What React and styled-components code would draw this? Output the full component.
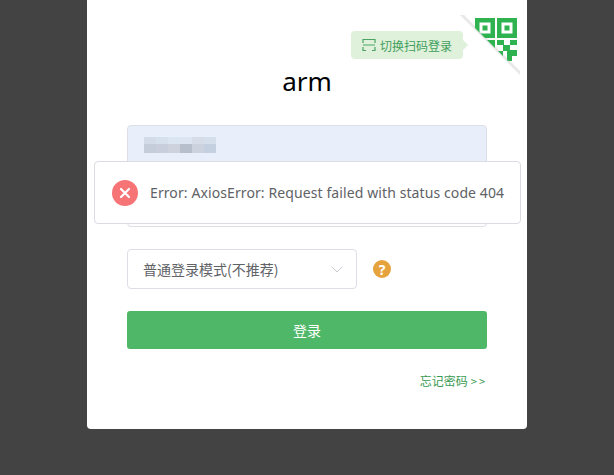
import React from 'react'
import styled, { createGlobalStyle } from 'styled-components'

const GlobalStyle = createGlobalStyle`
  html, body {
    margin: 0;
    height: 100%;
    background-color: #434343;
    overflow: hidden;
  }
`

const StyledPage = styled.div`
  position: relative;
  display: flex;
  justify-content: center;
  width: 614px;
  height: 475px;
  font-family: 'Noto Sans', 'Noto Sans CJK SC', sans-serif;
`

const StyledCard = styled.div`
  position: relative;
  box-sizing: border-box;
  width: 440px;
  height: 429px;
  padding: 64px 40px 0;
  background-color: #fff;
  border-radius: 0 0 4px 4px;
`

const StyledScanTip = styled.div`
  position: absolute;
  top: 31px;
  left: 264px;
  display: flex;
  align-items: center;
  gap: 4px;
  box-sizing: border-box;
  width: 112px;
  height: 28px;
  padding-left: 11px;
  color: #3f9f5a;
  font-size: 12px;
  font-family: 'Noto Sans CJK SC', sans-serif;
  background-color: #dff0db;
  border-radius: 4px;

  &::after {
    content: '';
    position: absolute;
    top: 9px;
    right: -5px;
    border-top: 5px solid transparent;
    border-bottom: 5px solid transparent;
    border-left: 5px solid #dff0db;
  }
`

const StyledQrCorner = styled.svg`
  position: absolute;
  top: 15px;
  left: 373px;
  display: block;
`

const StyledTitle = styled.h1`
  margin: 0 0 27px;
  height: 34px;
  color: #000;
  font-size: 26px;
  font-weight: 400;
  line-height: 34px;
  text-align: center;
`

const StyledForm = styled.div`
  display: flex;
  flex-direction: column;
  gap: 22px;
`

const StyledInput = styled.div`
  box-sizing: border-box;
  display: flex;
  align-items: center;
  width: 360px;
  height: 40px;
  padding-left: 16px;
  background-color: ${({ $filled }) => ($filled ? '#e8effb' : '#fff')};
  border: 1px solid #dcdfe6;
  border-radius: 4px;
`

const StyledMosaic = styled.div`
  display: grid;
  grid-template-columns: repeat(6, 12px);
  grid-template-rows: 7px 9px;
`

const StyledMosaicCell = styled.div`
  background-color: ${({ $tone }) => $tone};
`

const StyledModeRow = styled.div`
  display: flex;
  align-items: center;
  gap: 16px;
`

const StyledSelect = styled.div`
  box-sizing: border-box;
  display: flex;
  align-items: center;
  justify-content: space-between;
  width: 230px;
  height: 40px;
  padding: 0 13px 0 15px;
  color: #606266;
  font-size: 14px;
  font-family: 'Noto Sans CJK SC', sans-serif;
  background-color: #fff;
  border: 1px solid #dcdfe6;
  border-radius: 4px;
`

const StyledHelp = styled.span`
  display: flex;
  align-items: center;
  justify-content: center;
  width: 18px;
  height: 18px;
  color: #fff;
  font-size: 14px;
  font-weight: 700;
  background-color: #e6a23c;
  border-radius: 50%;
`

const StyledSubmit = styled.button`
  width: 360px;
  height: 38px;
  padding: 0;
  color: #fff;
  font-size: 14px;
  font-family: 'Noto Sans CJK SC', sans-serif;
  background-color: #4fb868;
  border: 0;
  border-radius: 3px;
`

const StyledForgot = styled.a`
  display: block;
  margin-top: 24px;
  color: #3a9a52;
  font-size: 12px;
  font-family: 'Noto Sans CJK SC', sans-serif;
  line-height: 16px;
  text-align: right;
`

const StyledArrows = styled.span`
  margin-left: 3px;
  font-size: 11px;
  letter-spacing: 2px;
`

const StyledToast = styled.div`
  position: absolute;
  top: 161px;
  left: 94px;
  display: flex;
  align-items: center;
  gap: 12px;
  box-sizing: border-box;
  width: 427px;
  height: 63px;
  padding-left: 17px;
  color: #606266;
  font-size: 14px;
  letter-spacing: 0.1px;
  background-color: #fff;
  border: 1px solid #d9dce1;
  border-radius: 4px;
`

const mosaicTones = [
  '#d3dbe8', '#d6dfec', '#dbe4f1', '#dce4f1', '#d6dde9', '#d5deeb',
  '#c5cddb', '#c8cedb', '#cdd2dd', '#b7bfcd', '#ccd3df', '#c4cfdf',
]

const ScanIcon = () => (
  <svg width="14" height="14" viewBox="0 0 14 14" fill="none" stroke="#4aa564" strokeWidth="1.2">
    <path d="M1 5V1.5h12V5M1 9v3.5h3M13 9v3.5h-3M1 7h12" />
  </svg>
)

const QrCorner = () => (
  <StyledQrCorner width="60" height="60" viewBox="0 0 60 60">
    <defs>
      <clipPath id="fold-side">
        <polygon points="0,-2 60,-2 60,58" />
      </clipPath>
    </defs>
    <polygon points="0,0 4,0 60,56 60,60" fill="#e8e8e8" />
    <g clipPath="url(#fold-side)" fill="#2fb350">
      <path fillRule="evenodd" d="M15 3h20v20H15zM19.5 7.5v11h11v-11z" />
      <rect x="22.5" y="10.5" width="5" height="5" />
      <path fillRule="evenodd" d="M37 3h20v20H37zM41.5 7.5v11h11v-11z" />
      <rect x="44.5" y="10.5" width="5" height="5" />
      <rect x="15" y="25" width="20" height="20" />
      <rect x="37" y="25" width="7" height="5" />
      <rect x="50" y="25" width="7" height="5" />
      <rect x="43" y="30" width="7" height="6" />
      <rect x="37" y="36" width="6" height="5" />
      <rect x="47" y="35" width="10" height="6" />
      <rect x="47" y="41" width="5" height="5" />
    </g>
  </StyledQrCorner>
)

const ChevronIcon = () => (
  <svg width="12" height="12" viewBox="0 0 12 12" fill="none" stroke="#c8cbd2" strokeWidth="1">
    <path d="M.5 3.5 6 9l5.5-5.5" />
  </svg>
)

const ErrorIcon = () => (
  <svg width="26" height="26" viewBox="0 0 26 26">
    <circle cx="13" cy="13" r="13" fill="#f67376" />
    <path d="M9 9l8 8M17 9l-8 8" stroke="#fff" strokeWidth="2.2" strokeLinecap="round" />
  </svg>
)

const App = () => (
  <StyledPage>
    <GlobalStyle />
    <StyledCard>
      <StyledScanTip>
        <ScanIcon />
        切换扫码登录
      </StyledScanTip>
      <QrCorner />
      <StyledTitle>arm</StyledTitle>
      <StyledForm>
        <StyledInput $filled>
          <StyledMosaic>
            {mosaicTones.map((tone, index) => (
              <StyledMosaicCell key={`cell_${index}`} $tone={tone} />
            ))}
          </StyledMosaic>
        </StyledInput>
        <StyledInput />
        <StyledModeRow>
          <StyledSelect>
            普通登录模式(不推荐)
            <ChevronIcon />
          </StyledSelect>
          <StyledHelp>?</StyledHelp>
        </StyledModeRow>
        <StyledSubmit>登录</StyledSubmit>
      </StyledForm>
      <StyledForgot>
        忘记密码<StyledArrows>&gt;&gt;</StyledArrows>
      </StyledForgot>
    </StyledCard>
    <StyledToast>
      <ErrorIcon />
      Error: AxiosError: Request failed with status code 404
    </StyledToast>
  </StyledPage>
)

export default App
